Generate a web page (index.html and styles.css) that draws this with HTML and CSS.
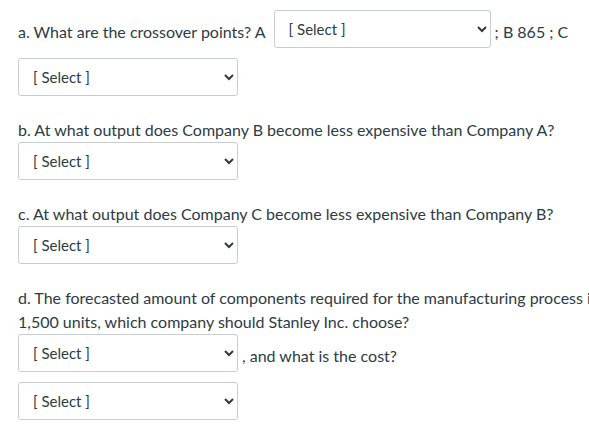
FILE: index.html
```html
<!DOCTYPE html>
<html lang="en">
<head>
<meta charset="utf-8">
<title>Crossover points</title>
<link rel="stylesheet" href="styles.css">
</head>
<body>
<div class="page">
  <div class="row row-a">
    <span class="txt">a. What are the crossover points? A</span>
    <select class="sel sel-a"><option>[ Select ]</option></select>
    <span class="txt after">; B 865 ; C</span>
  </div>
  <select class="sel block s-a2"><option>[ Select ]</option></select>

  <div class="q">
    <p class="qt">b. At what output does Company B become less expensive than Company A?</p>
    <select class="sel block"><option>[ Select ]</option></select>
  </div>

  <div class="q">
    <p class="qt">c. At what output does Company C become less expensive than Company B?</p>
    <select class="sel block"><option>[ Select ]</option></select>
  </div>

  <div class="q">
    <p class="qt">d. The forecasted amount of components required for the manufacturing process is 1,500 units, which company should Stanley Inc. choose?</p>
    <div class="row">
      <select class="sel"><option>[ Select ]</option></select>
      <span class="txt after">, and what is the cost?</span>
    </div>
    <select class="sel block s-last"><option>[ Select ]</option></select>
  </div>
</div>
</body>
</html>
```
FILE: styles.css
```css
html, body {
  margin: 0;
  padding: 0;
  overflow: hidden;
  background: #ffffff;
}
body {
  font-family: Lato, "Open Sans", sans-serif;
  font-size: 16px;
  line-height: 24px;
  color: #2d3b45;
}
.page {
  width: 600px;
  padding: 10px 0 0 18px;
}
.row {
  display: flex;
  align-items: flex-start;
}
.txt {
  margin-top: 10px;
  white-space: pre;
}
.row-a .txt:first-child {
  margin-right: 8px;
}
.after {
  margin-left: 4px;
}
.sel {
  box-sizing: border-box;
  width: 220px;
  height: 38px;
  margin: 0;
  padding: 0 8px 0 10px;
  font-family: Lato, "Open Sans", sans-serif;
  font-size: 15px;
  color: #2d3b45;
  background: #ffffff;
  border: 1px solid #c7cdd1;
  border-radius: 3px;
}
.sel-a {
  width: 217px;
}
.block {
  display: block;
}
.s-a2 {
  margin-top: 10px;
}
.q {
  margin-top: 22px;
}
.qt {
  margin: 0;
}
.s-last {
  margin-top: 10px;
}
```
